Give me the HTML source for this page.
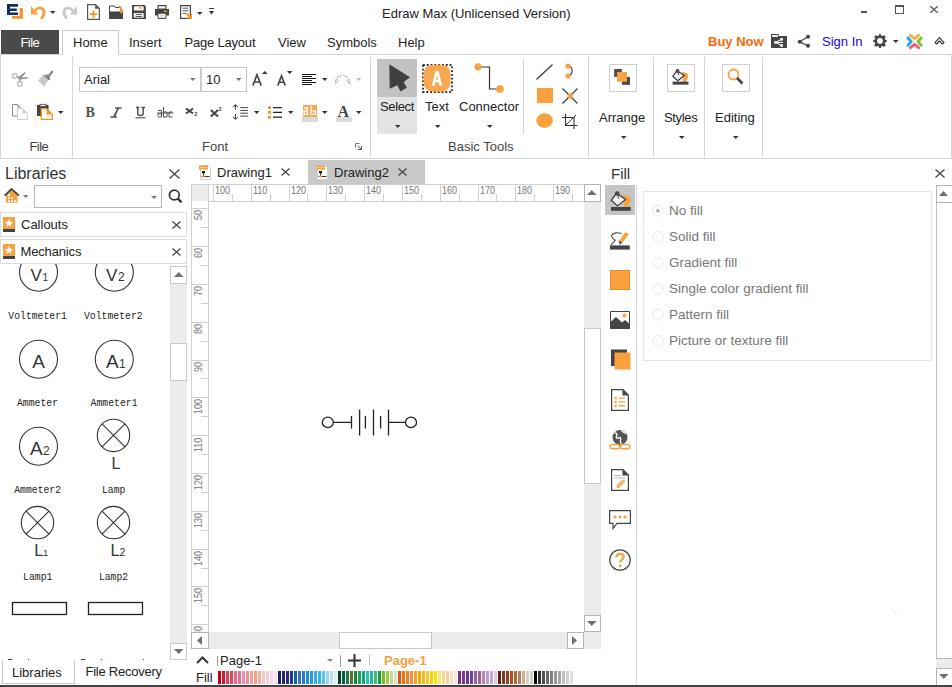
<!DOCTYPE html>
<html><head><meta charset="utf-8">
<style>
*{box-sizing:border-box;margin:0;padding:0}
html,body{width:952px;height:687px;overflow:hidden;background:#fff}
body{position:relative;font-family:"Liberation Sans",sans-serif;font-size:13px;color:#1e1e1e}
.a{position:absolute}
.t{position:absolute;white-space:nowrap;line-height:1}
svg{position:absolute;overflow:visible}
</style></head><body>

<!-- ===== TITLE BAR ===== -->
<div class="t" style="left:382px;top:6.5px;font-size:13px;color:#222">Edraw Max (Unlicensed Version)</div>


<!-- title bar icons -->
<svg style="left:7px;top:4px" width="16" height="15" viewBox="0 0 16 15">
 <path d="M0 0H11V2.7H3V4.4H9.8V6.9H3V8.4H11V11H0Z" fill="#15305e"/>
 <path d="M12.6 4H15.9V14.7H5.1V12H12.6Z" fill="#f7931e"/>
</svg>
<svg style="left:31px;top:6px" width="15" height="14" viewBox="0 0 15 14">
 <path d="M0 0V8.5H7.2Z" fill="#f9a03f"/>
 <path d="M4 5.2C5.5 1.8 9.5 0.8 11.8 3C14 5.2 13.2 9.5 10 12.8" stroke="#f9a03f" stroke-width="2.8" fill="none"/>
</svg>
<svg style="left:50px;top:11px" width="6" height="3"><path d="M0 0H5.5L2.75 3Z" fill="#333"/></svg>
<svg style="left:63px;top:6px" width="15" height="14" viewBox="0 0 15 14">
 <path d="M14 0V8.5H6.8Z" fill="#c8c8c8"/>
 <path d="M10 5.2C8.5 1.8 4.5 0.8 2.2 3C0 5.2 0.8 9.5 4 12.8" stroke="#c8c8c8" stroke-width="2.8" fill="none"/>
</svg>
<!-- new -->
<svg style="left:87px;top:4px" width="13" height="16" viewBox="0 0 13 16">
 <path d="M0.6 0.6H8.5L12.4 4.5V15.4H0.6Z" fill="#fff" stroke="#555" stroke-width="1.2"/>
 <path d="M8.2 0.6V4.8H12.4Z" fill="#555"/>
 <path d="M6.5 6.5V14M2.8 10.2H10.2" stroke="#f7931e" stroke-width="1.8"/>
</svg>
<!-- open -->
<svg style="left:109px;top:5px" width="15" height="14" viewBox="0 0 15 14">
 <path d="M0.5 1H5.5L6.5 2.5H12V7H0.5Z" fill="#fff" stroke="#444" stroke-width="1"/>
 <path d="M0 7H14V14H0Z" fill="#444"/>
 <path d="M9.5 1.5C12 1.5 12.5 3.5 12.5 6" stroke="#f7931e" stroke-width="1.6" fill="none"/>
 <path d="M9.8 5.5H15L12.4 9Z" fill="#f7931e"/>
</svg>
<!-- save -->
<svg style="left:132px;top:5px" width="14" height="14" viewBox="0 0 14 14">
 <path d="M0 0H12.5L13.9 1.4V13.9H0Z" fill="#444"/>
 <rect x="1.9" y="1.3" width="9.8" height="4.3" rx="1.2" fill="#fff"/>
 <rect x="7" y="2.2" width="2.7" height="1.4" fill="#f7931e"/>
 <rect x="1.7" y="8" width="10" height="4.7" rx="1.2" fill="#fff"/>
 <path d="M3.5 9.4H10M3.5 11.6H10" stroke="#444" stroke-width="1"/>
</svg>
<!-- print -->
<svg style="left:155px;top:5px" width="14" height="14" viewBox="0 0 14 14">
 <path d="M3 0.6H11V4H3Z" fill="#fff" stroke="#444" stroke-width="1.1"/>
 <path d="M0 4H14V10.5H0Z" fill="#444"/>
 <path d="M9 5.5H12V7H9Z" fill="#f7931e"/>
 <path d="M3 8.2H11V13.5H3Z" fill="#fff" stroke="#444" stroke-width="1"/>
 <path d="M4.5 10.3H9.5M4.5 12H9.5" stroke="#bbb" stroke-width="0.8"/>
</svg>
<!-- export -->
<svg style="left:180px;top:5px" width="13" height="14" viewBox="0 0 13 14">
 <path d="M0.6 0.6H10.4V13.4H0.6Z" fill="#fff" stroke="#444" stroke-width="1.2"/>
 <path d="M2.5 3.2H8.5M2.5 5.8H8.5M2.5 8.4H6" stroke="#555" stroke-width="1"/>
 <path d="M6.5 8.5L10 12" stroke="#f7931e" stroke-width="2"/>
 <path d="M12 8.5V13.8H6.7Z" fill="#f7931e"/>
</svg>
<svg style="left:197px;top:12px" width="6" height="3"><path d="M0 0H5.5L2.75 3Z" fill="#333"/></svg>
<svg style="left:209px;top:8px" width="5" height="7"><path d="M0 0.5H5" stroke="#333" stroke-width="1"/><path d="M0 3H5L2.5 6.5Z" fill="#333"/></svg>
<!-- window controls -->
<div class="a" style="left:861px;top:11px;width:6px;height:2px;background:#555"></div>
<div class="a" style="left:895px;top:5px;width:9px;height:9px;border:1px solid #555;border-top-width:2px"></div>
<svg style="left:930px;top:6px" width="8" height="7"><path d="M0.3 0.3L7.7 6.7M7.7 0.3L0.3 6.7" stroke="#555" stroke-width="1.2"/></svg>

<!-- ===== MENU BAR ===== -->
<div class="a" style="left:1px;top:30px;width:58px;height:24px;background:#4a4a4a"></div>
<div class="t" style="left:20.5px;top:36px;color:#fff;letter-spacing:-0.6px">File</div>
<div class="a" style="left:62px;top:30px;width:57px;height:25px;background:#fff;border:1px solid #c9c9c9;border-bottom:none;z-index:2"></div>
<div class="t" style="left:73px;top:36px;z-index:3">Home</div>
<div class="t" style="left:129px;top:36px">Insert</div>
<div class="t" style="left:184.5px;top:36px;letter-spacing:-0.2px">Page Layout</div>
<div class="t" style="left:278px;top:36px">View</div>
<div class="t" style="left:327px;top:36px">Symbols</div>
<div class="t" style="left:398px;top:36px">Help</div>

<!-- ===== RIBBON ===== -->
<div class="a" style="left:0px;top:54px;width:952px;height:105px;border:1px solid #d5d5d5;background:#fff"></div>
<div class="t" style="left:708px;top:35.2px;color:#fa6a05;font-weight:bold">Buy Now</div>
<svg style="left:771px;top:34px" width="16" height="14" viewBox="0 0 16 14">
 <path d="M0 0H7.7V2.1H16V14H0Z" fill="#444"/>
 <rect x="1" y="1.1" width="5.9" height="1.8" fill="#fff"/>
 <path d="M4.6 8.4L10.6 5.3M4.6 8.4L10.6 11.5M4.6 8.4H12" stroke="#fff" stroke-width="1"/>
 <g fill="#fff"><rect x="9.3" y="4" width="2.6" height="2.6"/><rect x="3.3" y="7.1" width="2.6" height="2.6"/><rect x="9.3" y="10.2" width="2.6" height="2.6"/></g>
</svg>
<svg style="left:798px;top:35px" width="13" height="13" viewBox="0 0 13 13">
 <path d="M10 1.8L1.6 6.8L10 10.8" stroke="#444" stroke-width="1.3" fill="none"/>
 <circle cx="10" cy="1.8" r="2" fill="#444"/><circle cx="1.8" cy="6.8" r="2" fill="#444"/><circle cx="10" cy="10.8" r="2" fill="#444"/>
</svg>
<div class="t" style="left:822px;top:35.2px;color:#2200f5">Sign In</div>
<svg style="left:873px;top:34px" width="14" height="14" viewBox="0 0 14 14">
 <g fill="#444"><rect x="2" y="2" width="10" height="10" rx="1.2"/>
 <rect x="5.7" y="0.1" width="2.6" height="13.8" rx="1.2"/><rect x="0.1" y="5.7" width="13.8" height="2.6" rx="1.2"/>
 <rect x="5.6" y="-0.3" width="2.8" height="14.6" rx="1.4" transform="rotate(45 7 7)"/><rect x="5.6" y="-0.3" width="2.8" height="14.6" rx="1.4" transform="rotate(-45 7 7)"/></g>
 <circle cx="7" cy="7" r="2.9" fill="#fff"/>
</svg>
<svg style="left:893px;top:40px" width="6" height="3"><path d="M0 0H5.5L2.75 3Z" fill="#333"/></svg>
<svg style="left:906px;top:33px" width="17" height="17" viewBox="0 0 17 17">
 <g fill="none" stroke-width="3" stroke-linecap="round" stroke-linejoin="round">
 <path d="M4.4 2.4L8.6 5.6L12.6 2.4" stroke="#f3b33d"/>
 <path d="M2 4.9L5.2 8.5L2 12.2" stroke="#2fa6e2"/>
 <path d="M15.2 4.9L12 8.5L15.2 12.2" stroke="#7fc241"/>
 <path d="M4.4 14.6L8.6 11.4L12.6 14.6" stroke="#ef5a7e"/>
 </g>
</svg>
<svg style="left:934px;top:36px" width="11" height="9" viewBox="0 0 11 9"><path d="M1 6.6L5.5 1.6L10 6.6L8.4 8L5.5 5L2.6 8Z" fill="none" stroke="#333" stroke-width="1.1" stroke-linejoin="round"/></svg>

<!-- ribbon separators -->
<div class="a" style="left:72px;top:57px;width:1px;height:100px;background:#d5d5d5"></div>
<div class="a" style="left:370px;top:57px;width:1px;height:100px;background:#d5d5d5"></div>
<div class="a" style="left:523px;top:59px;width:1px;height:75px;background:#d5d5d5"></div>
<div class="a" style="left:588px;top:57px;width:1px;height:100px;background:#d5d5d5"></div>
<div class="a" style="left:653px;top:57px;width:1px;height:100px;background:#d5d5d5"></div>
<div class="a" style="left:704px;top:57px;width:1px;height:100px;background:#d5d5d5"></div>
<div class="a" style="left:762px;top:57px;width:1px;height:100px;background:#d5d5d5"></div>
<!-- group labels -->
<div class="t" style="left:29.5px;top:140px;color:#444;letter-spacing:-0.6px">File</div>
<div class="t" style="left:202px;top:140px;color:#444">Font</div>
<div class="t" style="left:448px;top:140px;color:#444">Basic Tools</div>
<svg style="left:355px;top:143px" width="7" height="7" viewBox="0 0 7 7"><path d="M0.5 0.5H4.5M0.5 0.5V4.5" stroke="#777" stroke-width="1" fill="none"/><path d="M2.5 2.5L6 6M6.5 3V6.5H3" stroke="#555" stroke-width="1" fill="none"/></svg>
<!-- File group icons -->
<svg style="left:12px;top:70px" width="17" height="18" viewBox="12 70 17 18">
 <circle cx="14.8" cy="76" r="2.3" fill="none" stroke="#cacaca" stroke-width="1.7"/>
 <circle cx="19.8" cy="83.9" r="2.3" fill="none" stroke="#cacaca" stroke-width="1.7"/>
 <path d="M17 76.6L19.2 77.6L19.8 81.5" stroke="#8c8c8c" stroke-width="1.4" fill="none"/>
 <path d="M18.3 77.2L24.6 72.2L25.7 73L20.2 78.8Z" fill="#8c8c8c"/>
 <path d="M19 77.6L27.9 77.2L27.6 78.6L20.2 79.5Z" fill="#8c8c8c"/>
</svg>
<svg style="left:37px;top:70px" width="17" height="18" viewBox="37 70 17 18">
 <path d="M38.2 80.4L42.9 75.3L48.2 80.1L44.2 86.7Z" fill="#c8c8c8"/>
 <path d="M42.9 75.3L49.8 74L50.2 80.2L48.2 80.1Z" fill="#8c8c8c"/>
 <path d="M49.3 75.5L52.3 71.6" stroke="#8c8c8c" stroke-width="2.2" stroke-linecap="round"/>
</svg>
<svg style="left:12px;top:104px" width="16" height="16" viewBox="0 0 16 16">
 <path d="M0.5 0.5H5.5L8.5 3.5V12H0.5Z" fill="#fff" stroke="#8a8a8a" stroke-width="1"/>
 <path d="M5.5 0.5V3.5H8.5Z" fill="#999"/>
 <path d="M5.5 4.5H10.5L15.5 9.5V15.5H5.5Z" fill="#fff" stroke="#cfcfcf" stroke-width="1"/>
 <path d="M10.5 4.5V9.5H15.5Z" fill="#d0d0d0"/>
</svg>
<svg style="left:37px;top:104px" width="17" height="16" viewBox="0 0 17 16">
 <rect x="0" y="1" width="11.5" height="11" fill="#444"/>
 <rect x="3" y="0.3" width="6" height="2" fill="#fff" stroke="#444" stroke-width="0.8"/>
 <path d="M4.3 4.6H9.5L15.3 10.4V15.4H4.3Z" fill="#fff" stroke="#f7931e" stroke-width="1.3"/>
 <path d="M9.5 4.6V10.4H15.3Z" fill="#f7931e"/>
</svg>
<svg style="left:58px;top:111px" width="6" height="3"><path d="M0 0H5.5L2.75 3Z" fill="#333"/></svg>




<!-- Font group -->
<div class="a" style="left:79px;top:67px;width:168px;height:25px;border:1px solid #c6c6c6;background:#fff"></div>
<div class="a" style="left:200px;top:67px;width:2px;height:25px;background:#cbcbcb"></div>
<div class="t" style="left:84px;top:73px;color:#222">Arial</div>
<svg style="left:190px;top:78px" width="6" height="3"><path d="M0 0H5.5L2.75 3Z" fill="#777"/></svg>
<div class="t" style="left:206px;top:73px;color:#222">10</div>
<svg style="left:236px;top:78px" width="6" height="3"><path d="M0 0H5.5L2.75 3Z" fill="#777"/></svg>
<svg style="left:252px;top:74px" width="10" height="12" viewBox="0 0 10 12"><path d="M0.8 11.6L5 0.8L9.2 11.6M2.3 8H7.7" stroke="#444" stroke-width="1.6" fill="none"/></svg>
<svg style="left:262px;top:71px" width="6" height="3"><path d="M0 3H5.5L2.75 0Z" fill="#333"/></svg>
<svg style="left:277px;top:75px" width="9" height="11" viewBox="0 0 9 11"><path d="M0.8 10.6L4.5 0.8L8.2 10.6M2.1 7.2H6.9" stroke="#444" stroke-width="1.6" fill="none"/></svg>
<svg style="left:287px;top:71px" width="6" height="3"><path d="M0 0H5.5L2.75 3Z" fill="#333"/></svg>
<svg style="left:302px;top:74px" width="15" height="11" viewBox="0 0 15 11"><path d="M0 0.5H14M0 2.5H10M0 4.5H14M0 6.5H10M0 8.5H14M0 10.5H10" stroke="#111" stroke-width="1"/></svg>
<svg style="left:322px;top:78px" width="6" height="3"><path d="M0 0H5.5L2.75 3Z" fill="#333"/></svg>
<svg style="left:330px;top:66px" width="24" height="20" viewBox="0 0 24 20">
 <path d="M7 11.7L11.7 9.1M13.3 9.1L17.8 11.7" stroke="#a8a8a8" stroke-width="1.3" stroke-dasharray="1.2 0.6"/>
 <circle cx="6.6" cy="14.4" r="1.2" fill="none" stroke="#aaa" stroke-width="0.9"/>
 <circle cx="18.6" cy="14.4" r="1.2" fill="none" stroke="#aaa" stroke-width="0.9"/>
 <path d="M6.3 15.6L5.8 17.6H5M18.9 15.6L19.4 17.6H20.8" stroke="#999" stroke-width="0.9" fill="none"/>
</svg>
<svg style="left:356px;top:78px" width="6" height="3"><path d="M0 0H5.5L2.75 3Z" fill="#bbb"/></svg>
<!-- row 2 -->
<div class="t" style="left:85.5px;top:106px;font-family:'Liberation Serif',serif;font-weight:bold;font-size:14px;color:#505050">B</div>
<svg style="left:110px;top:107px" width="12" height="11" viewBox="0 0 12 11"><path d="M5 1H11.5M0.5 10H7M8.5 1L3.5 10" stroke="#505050" stroke-width="1.5" fill="none"/><path d="M8.3 1L4.5 10" stroke="#505050" stroke-width="1.2"/></svg>
<svg style="left:135px;top:106px" width="11" height="13" viewBox="0 0 11 13"><path d="M1 1.5H4.5M6.5 1.5H10M2.8 1.5V7.5C2.8 10.2 8.2 10.2 8.2 7.5V1.5" stroke="#505050" stroke-width="1.5" fill="none"/><path d="M0.5 11.8H10.5" stroke="#505050" stroke-width="1.1"/></svg>
<svg style="left:157px;top:107px" width="17" height="11" viewBox="0 0 17 11"><g stroke="#505050" stroke-width="1" fill="none"><path d="M1 3.5H4.5V10H1.5C0.5 10 0.5 7 1.5 7H4.5"/><path d="M6.5 0V10H10V5H6.5"/><path d="M15.5 5H12V10H15.5"/><path d="M0 6H16.5"/></g></svg>
<svg style="left:185px;top:107px" width="13" height="11" viewBox="0 0 13 11"><path d="M1 1.5L8 6.5M8 1.5L1 6.5" stroke="#444" stroke-width="2.1"/><text x="9.3" y="9.4" font-family="Liberation Sans" font-weight="bold" font-size="5.5" fill="#444">2</text></svg>
<svg style="left:210px;top:107px" width="13" height="11" viewBox="0 0 13 11"><path d="M0.8 3L8 9.5M8 3L0.8 9.5" stroke="#444" stroke-width="2.1"/><text x="8.6" y="3.8" font-family="Liberation Sans" font-weight="bold" font-size="5.5" fill="#444">2</text></svg>
<svg style="left:232px;top:104px" width="17" height="16" viewBox="0 0 17 16"><path d="M3.4 1V5.5M3.4 10V15" stroke="#333" stroke-width="1"/><path d="M1 3.2L3.4 0.6L5.8 3.2M1 12.8L3.4 15.4L5.8 12.8" stroke="#333" stroke-width="1" fill="none"/><path d="M8.3 3.6H16.1M8.3 6.4H16.1M8.3 9.2H16.1M8.3 12.1H16.1" stroke="#444" stroke-width="1"/></svg>
<svg style="left:254px;top:111px" width="6" height="3"><path d="M0 0H5.5L2.75 3Z" fill="#333"/></svg>
<svg style="left:268px;top:106px" width="15" height="13" viewBox="0 0 15 13"><path d="M0 0.3H3V3H0ZM0 5H3V7.8H0ZM0 10H3V12.8H0Z" fill="#f7931e"/><path d="M5 1.6H14M5 6.4H14M5 11.2H14" stroke="#222" stroke-width="1.2"/></svg>
<svg style="left:288px;top:111px" width="6" height="3"><path d="M0 0H5.5L2.75 3Z" fill="#333"/></svg>
<svg style="left:302px;top:105px" width="16" height="17" viewBox="0 0 16 17"><rect x="1" y="0" width="14" height="12" fill="#f9a84f"/>
<path d="M2 2.8H5.3V9.3H2.2V5.9H5.3M9 0.8V9.3H13.3V5.9H9" stroke="#fff" stroke-width="1.3" fill="none"/>
<rect x="0" y="12" width="16" height="5" fill="#d9d9d9"/></svg>
<svg style="left:322px;top:111px" width="6" height="3"><path d="M0 0H5.5L2.75 3Z" fill="#333"/></svg>
<svg style="left:336px;top:104px" width="16" height="18" viewBox="0 0 16 18"><text x="1.5" y="12.5" font-family="Liberation Serif" font-weight="bold" font-size="16" fill="#444">A</text><rect x="0" y="13" width="16" height="5" fill="#d9d9d9"/></svg>
<svg style="left:356px;top:111px" width="6" height="3"><path d="M0 0H5.5L2.75 3Z" fill="#333"/></svg>

<!-- Basic Tools -->
<div class="a" style="left:377px;top:59px;width:40px;height:38px;background:#c2c2c2"></div>
<div class="a" style="left:377px;top:97px;width:40px;height:37px;background:#e3e3e3"></div>
<svg style="left:388px;top:64px" width="23" height="28" viewBox="0 0 23 28"><path d="M1.3 0.3L1.7 24.7L9.4 21.3L12.4 27.6L18.9 23.8L15.7 18L22 13.3Z" fill="#404040"/></svg>
<div class="t" style="left:380px;top:100px;color:#222;letter-spacing:-0.35px">Select</div>
<svg style="left:395px;top:125px" width="6" height="3"><path d="M0 0H5.5L2.75 3Z" fill="#333"/></svg>
<svg style="left:422px;top:64px" width="31" height="29" viewBox="0 0 31 29"><rect x="1" y="1" width="29" height="27" fill="none" stroke="#222" stroke-width="1.8" stroke-dasharray="1.8 2"/><rect x="1.5" y="0.7" width="27" height="27" rx="9" fill="#f9a84f"/><path d="M9.8 21.5L13.4 7.3H16.6L20.2 21.5H17.3L16.6 18.3H13.4L12.7 21.5ZM14 15.8H16L15 10.8Z" fill="#fff" fill-rule="evenodd"/></svg>
<div class="t" style="left:425px;top:100px;color:#222">Text</div>
<svg style="left:435px;top:125px" width="6" height="3"><path d="M0 0H5.5L2.75 3Z" fill="#333"/></svg>
<svg style="left:474px;top:63px" width="31" height="31" viewBox="0 0 31 31"><path d="M4 4H15.5V26H26" stroke="#333" stroke-width="1.2" fill="none"/><circle cx="4" cy="3.8" r="3.6" fill="#f9a03f"/><circle cx="26" cy="26" r="3.8" fill="#f9a03f"/></svg>
<div class="t" style="left:459px;top:100px;color:#222">Connector</div>
<svg style="left:487px;top:125px" width="6" height="3"><path d="M0 0H5.5L2.75 3Z" fill="#333"/></svg>
<svg style="left:536px;top:64px" width="17" height="16"><path d="M0.5 15.5L16.5 0.5" stroke="#333" stroke-width="1.1"/></svg>
<svg style="left:564px;top:63px" width="12" height="16" viewBox="0 0 12 16"><path d="M4 3C9 3.5 10 11 4 13" stroke="#333" stroke-width="1.1" fill="none"/><circle cx="4" cy="3" r="2.6" fill="#f9a03f"/><circle cx="4" cy="13" r="2.6" fill="#f9a03f"/></svg>
<div class="a" style="left:537px;top:88px;width:16px;height:15px;background:#f9a03f"></div>
<svg style="left:562px;top:88px" width="16" height="16" viewBox="0 0 16 16"><path d="M0.5 0.5L15.5 15.5M15.5 0.5L0.5 15.5" stroke="#333" stroke-width="1.1"/><circle cx="8" cy="8" r="2.8" fill="#f9a03f"/></svg>
<svg style="left:536px;top:113px" width="18" height="16"><ellipse cx="8.6" cy="7.6" rx="8.3" ry="7.3" fill="#f9a03f"/></svg>
<svg style="left:562px;top:114px" width="16" height="15" viewBox="0 0 16 15"><path d="M3.5 0V11.5H15.5M0 3.5H12V15" stroke="#333" stroke-width="1.1" fill="none"/><path d="M4 11L14 1" stroke="#333" stroke-width="1"/></svg>

<!-- Arrange / Styles / Editing -->
<div class="a" style="left:609px;top:64px;width:28px;height:28px;border:1px solid #d0d0d0"></div>
<svg style="left:614px;top:69px" width="17" height="17" viewBox="0 0 17 17"><rect x="0.2" y="0" width="7.6" height="7.9" fill="#4a4a4a"/><rect x="8" y="7.9" width="8" height="7.9" fill="#4a4a4a"/><rect x="3" y="3" width="10" height="9.8" fill="#f9a03f"/></svg>
<div class="t" style="left:599px;top:111px;color:#222">Arrange</div>
<svg style="left:621px;top:136px" width="6" height="3"><path d="M0 0H5.5L2.75 3Z" fill="#333"/></svg>
<div class="a" style="left:667px;top:64px;width:28px;height:28px;border:1px solid #d0d0d0"></div>
<svg style="left:670.6px;top:68.4px" width="18.4" height="16.8" viewBox="0 0 23 21">
 <path d="M13 5C17 5 21.5 6 21.8 10.3C22 12.5 19.5 13.5 19 16.8H15L14.6 13.6L16.7 9.4Z" fill="#f9a03f"/>
 <path d="M2.2 10.3L7.5 3.3L16.7 9.4L8.5 15.9Z" fill="#f0f0f0" stroke="#333" stroke-width="1.4" stroke-linejoin="round"/>
 <circle cx="8.3" cy="3.6" r="1.7" fill="none" stroke="#333" stroke-width="1.3"/>
 <path d="M8.6 4.5L9.6 8.6" stroke="#444" stroke-width="1.3"/>
 <rect x="2" y="17" width="19.8" height="3.8" fill="#444"/>
</svg>
<div class="t" style="left:664px;top:111px;color:#222;letter-spacing:-0.35px">Styles</div>
<svg style="left:679px;top:136px" width="6" height="3"><path d="M0 0H5.5L2.75 3Z" fill="#333"/></svg>
<div class="a" style="left:722px;top:64px;width:28px;height:28px;border:1px solid #d0d0d0"></div>
<svg style="left:727px;top:68px" width="18" height="18" viewBox="0 0 18 18"><circle cx="6.5" cy="6.5" r="5" fill="none" stroke="#f9a03f" stroke-width="1.8"/><path d="M10 10L15.5 15.5" stroke="#444" stroke-width="2.6"/></svg>
<div class="t" style="left:715px;top:111px;color:#222">Editing</div>
<svg style="left:733px;top:136px" width="6" height="3"><path d="M0 0H5.5L2.75 3Z" fill="#333"/></svg>

<!-- ===== LIBRARIES PANEL ===== -->
<div class="t" style="left:5px;top:165.8px;font-size:16px;color:#333">Libraries</div>
<svg style="left:169px;top:169px" width="11" height="10"><path d="M0.5 0.5L10.5 9.5M10.5 0.5L0.5 9.5" stroke="#444" stroke-width="1.3"/></svg>
<div class="a" style="left:34px;top:185px;width:128px;height:23px;border:1px solid #b9b9b9;background:#fff"></div>
<svg style="left:151px;top:196px" width="6" height="3"><path d="M0 0H6L3 3Z" fill="#777"/></svg>
<div class="a" style="left:0px;top:212px;width:187px;height:25px;border:1px solid #dcdcdc;background:#fff"></div>
<div class="t" style="left:21px;top:218px;color:#222">Callouts</div>
<svg style="left:172px;top:221px" width="9" height="8"><path d="M0.5 0.5L8.5 7.5M8.5 0.5L0.5 7.5" stroke="#444" stroke-width="1.2"/></svg>
<div class="a" style="left:0px;top:239px;width:187px;height:25px;border:1px solid #dcdcdc;background:#fff"></div>
<div class="t" style="left:20.5px;top:245px;color:#222;letter-spacing:-0.15px">Mechanics</div>
<svg style="left:172px;top:248px" width="9" height="8"><path d="M0.5 0.5L8.5 7.5M8.5 0.5L0.5 7.5" stroke="#444" stroke-width="1.2"/></svg>

<!-- library icons -->
<svg style="left:4px;top:188px" width="16" height="15" viewBox="0 0 16 15">
 <path d="M2.1 7.3L7.55 2.2L13.5 7.3V14.7H2.1Z" fill="#f9a03f"/>
 <path d="M0.6 7.6L7.55 1L14.9 7.6" stroke="#444" stroke-width="1.9" fill="none"/>
 <g fill="#fff"><rect x="4" y="6.1" width="1.9" height="1.9"/><rect x="4" y="9.1" width="1.9" height="1.9"/><rect x="7.1" y="9.1" width="1.9" height="1.9"/><rect x="4" y="12.2" width="1.9" height="1.9"/><rect x="7.1" y="12.2" width="1.9" height="1.9"/><rect x="10.1" y="12.2" width="1.9" height="1.9"/></g>
</svg>
<svg style="left:23px;top:195px" width="6" height="3"><path d="M0 0H5.5L2.75 3Z" fill="#777"/></svg>
<svg style="left:168px;top:189px" width="15" height="15" viewBox="0 0 15 15"><circle cx="6.3" cy="6" r="4.9" fill="none" stroke="#333" stroke-width="1.7"/><path d="M9.6 9.4L13.5 13.3" stroke="#333" stroke-width="2.4"/></svg>
<svg style="left:3px;top:217px" width="12" height="15" viewBox="0 0 12 15"><rect x="0" y="0" width="12" height="12" fill="#f9a03f"/><rect x="0" y="12" width="12" height="3" fill="#444"/><path d="M6 2L7.2 4.8L10.2 5L7.9 6.9L8.6 9.8L6 8.2L3.4 9.8L4.1 6.9L1.8 5L4.8 4.8Z" fill="#fff"/></svg>
<svg style="left:3px;top:244px" width="12" height="15" viewBox="0 0 12 15"><rect x="0" y="0" width="12" height="12" fill="#f9a03f"/><rect x="0" y="12" width="12" height="3" fill="#444"/><path d="M6 2L7.2 4.8L10.2 5L7.9 6.9L8.6 9.8L6 8.2L3.4 9.8L4.1 6.9L1.8 5L4.8 4.8Z" fill="#fff"/></svg>
<!-- library shapes -->
<div class="a" style="left:0px;top:264px;width:170px;height:396px;overflow:hidden">
<svg style="left:0px;top:0px" width="170" height="396" viewBox="0 264 170 396">
 <g fill="none" stroke="#333" stroke-width="1.1">
  <circle cx="38.5" cy="272.2" r="19"/>
  <circle cx="114.3" cy="272.2" r="19"/>
  <circle cx="38.5" cy="359.2" r="19"/>
  <circle cx="114.3" cy="359.2" r="19"/>
  <circle cx="38.5" cy="446.2" r="19"/>
  <circle cx="113.5" cy="435.4" r="16.2"/>
  <path d="M102 423.9L125 446.9M125 423.9L102 446.9"/>
  <circle cx="37.5" cy="522.6" r="16.2"/>
  <path d="M26 511.1L49 534.1M49 511.1L26 534.1"/>
  <circle cx="113.5" cy="522.6" r="16.2"/>
  <path d="M102 511.1L125 534.1M125 511.1L102 534.1"/>
 </g>
 <g fill="none" stroke="#222" stroke-width="1.3">
  <rect x="12.5" y="602.5" width="54" height="12"/>
  <rect x="88.5" y="602.5" width="54" height="12"/>
 </g>
 <g font-family="Liberation Sans" fill="#333">
  <text x="30.5" y="280.5" font-size="17">V</text><text x="42.5" y="280.5" font-size="10">1</text>
  <text x="106" y="280.5" font-size="17">V</text><text x="118" y="280.5" font-size="12">2</text>
  <text x="32.3" y="367.8" font-size="19">A</text>
  <text x="106" y="367.8" font-size="19">A</text><text x="119" y="367.8" font-size="12">1</text>
  <text x="30" y="454.8" font-size="19">A</text><text x="43" y="454.8" font-size="12">2</text>
  <text x="111.4" y="468.7" font-size="16">L</text>
  <text x="34.3" y="556" font-size="16.5">L</text><text x="43" y="556" font-size="9.5">1</text>
  <text x="110.6" y="556" font-size="16.5">L</text><text x="119.5" y="556" font-size="10.5">2</text>
 </g>
 <g font-family="Liberation Mono" fill="#222" font-size="11.3">
  <text x="8.3" y="319.2" textLength="58.6" lengthAdjust="spacingAndGlyphs">Voltmeter1</text>
  <text x="84" y="319.2" textLength="58.6" lengthAdjust="spacingAndGlyphs">Voltmeter2</text>
  <text x="17" y="406" textLength="41.0" lengthAdjust="spacingAndGlyphs">Ammeter</text>
  <text x="90.6" y="406" textLength="46.9" lengthAdjust="spacingAndGlyphs">Ammeter1</text>
  <text x="14.2" y="492.8" textLength="46.9" lengthAdjust="spacingAndGlyphs">Ammeter2</text>
  <text x="102" y="492.8" textLength="23.4" lengthAdjust="spacingAndGlyphs">Lamp</text>
  <text x="23.1" y="580" textLength="29.3" lengthAdjust="spacingAndGlyphs">Lamp1</text>
  <text x="98.9" y="580" textLength="29.3" lengthAdjust="spacingAndGlyphs">Lamp2</text>
 </g>
</svg>
</div>

<div class="a" style="left:8px;top:659px;width:4px;height:1px;background:#444"></div><div class="a" style="left:28px;top:659px;width:1px;height:1px;background:#555"></div><div class="a" style="left:81px;top:659px;width:4px;height:1px;background:#444"></div><div class="a" style="left:101px;top:659px;width:1px;height:1px;background:#555"></div><div class="a" style="left:143px;top:659px;width:1px;height:1px;background:#555"></div>
<!-- lib scrollbar -->
<div class="a" style="left:170px;top:266px;width:17px;height:394px;background:#ececec"></div>
<div class="a" style="left:170px;top:266px;width:17px;height:18px;border:1px solid #c8c8c8;background:#fff"></div>
<svg style="left:173.5px;top:272px" width="10" height="5"><path d="M0 5H9.5L4.75 0Z" fill="#707070"/></svg>
<div class="a" style="left:170px;top:343px;width:17px;height:38px;border:1px solid #c8c8c8;background:#fff"></div>
<div class="a" style="left:170px;top:643px;width:17px;height:17px;border:1px solid #c8c8c8;background:#fff"></div>
<svg style="left:173.5px;top:649px" width="10" height="5"><path d="M0 0H9.5L4.75 5Z" fill="#707070"/></svg>
<!-- bottom tabs -->
<div class="a" style="left:2px;top:660px;width:73px;height:24px;border:1px solid #c8c8c8;border-top:none;background:#fff"></div>
<div class="t" style="left:12px;top:666px;color:#222">Libraries</div>
<div class="t" style="left:85.5px;top:665px;color:#222;letter-spacing:-0.25px">File Recovery</div>

<!-- ===== CANVAS AREA ===== -->
<div class="a" style="left:308px;top:160px;width:117px;height:24px;background:#c8c8c8"></div>
<div class="t" style="left:217px;top:166px;color:#222">Drawing1</div>
<svg style="left:281px;top:168px" width="9" height="8"><path d="M0.5 0.5L8.5 7.5M8.5 0.5L0.5 7.5" stroke="#444" stroke-width="1.2"/></svg>
<div class="t" style="left:334px;top:166px;color:#222">Drawing2</div>
<svg style="left:398px;top:168px" width="9" height="8"><path d="M0.5 0.5L8.5 7.5M8.5 0.5L0.5 7.5" stroke="#444" stroke-width="1.2"/></svg>
<!-- rulers -->
<div class="a" style="left:191px;top:184px;width:410px;height:18px;background:#fff;border-bottom:1px solid #d0d0d0;border-top:1px solid #d0d0d0"></div>
<div class="a" style="left:191px;top:184px;width:18px;height:449px;background:#fff;border-left:1px solid #d0d0d0;border-right:1px solid #d0d0d0;border-top:1px solid #d0d0d0"></div>
<div class="a" style="left:192px;top:185px;width:16px;height:16px;background:#ececec"></div>
<!-- v scrollbar -->
<div class="a" style="left:584px;top:184px;width:17px;height:449px;background:#ececec"></div>
<div class="a" style="left:584px;top:184px;width:17px;height:18px;border:1px solid #b4b4b4;background:#fff"></div>
<svg style="left:587px;top:190px" width="10" height="5"><path d="M0 5H9.5L4.75 0Z" fill="#707070"/></svg>
<div class="a" style="left:584px;top:328px;width:17px;height:156px;border:1px solid #c8c8c8;background:#fff"></div>
<div class="a" style="left:584px;top:615px;width:17px;height:17px;border:1px solid #b4b4b4;background:#fff"></div>
<svg style="left:587px;top:621px" width="10" height="5"><path d="M0 0H9.5L4.75 5Z" fill="#707070"/></svg>
<!-- h scrollbar -->
<div class="a" style="left:191px;top:632px;width:410px;height:17px;background:#ececec"></div>
<div class="a" style="left:191px;top:632px;width:18px;height:17px;border:1px solid #b4b4b4;background:#fff"></div>
<svg style="left:197px;top:636px" width="5" height="9"><path d="M5 0V9L0 4.5Z" fill="#707070"/></svg>
<div class="a" style="left:339px;top:632px;width:93px;height:17px;border:1px solid #c8c8c8;background:#fff"></div>
<div class="a" style="left:567px;top:632px;width:17px;height:17px;border:1px solid #b4b4b4;background:#fff"></div>
<svg style="left:572px;top:636px" width="5" height="9"><path d="M0 0V9L5 4.5Z" fill="#707070"/></svg>

<!-- ruler marks -->
<div class="a" style="left:192px;top:185px;width:392px;height:16px;overflow:hidden"><div class="a" style="left:21px;top:0px;width:1px;height:16px;background:#d0d0d0"></div><div class="t" style="left:23px;top:1.2px;font-size:10px;color:#777;transform-origin:0 0;transform:scaleX(0.9)">100</div><div class="a" style="left:40px;top:9px;width:1px;height:7px;background:#d0d0d0"></div><div class="a" style="left:59px;top:0px;width:1px;height:16px;background:#d0d0d0"></div><div class="t" style="left:61px;top:1.2px;font-size:10px;color:#777;transform-origin:0 0;transform:scaleX(0.9)">110</div><div class="a" style="left:78px;top:9px;width:1px;height:7px;background:#d0d0d0"></div><div class="a" style="left:97px;top:0px;width:1px;height:16px;background:#d0d0d0"></div><div class="t" style="left:99px;top:1.2px;font-size:10px;color:#777;transform-origin:0 0;transform:scaleX(0.9)">120</div><div class="a" style="left:115px;top:9px;width:1px;height:7px;background:#d0d0d0"></div><div class="a" style="left:134px;top:0px;width:1px;height:16px;background:#d0d0d0"></div><div class="t" style="left:136px;top:1.2px;font-size:10px;color:#777;transform-origin:0 0;transform:scaleX(0.9)">130</div><div class="a" style="left:153px;top:9px;width:1px;height:7px;background:#d0d0d0"></div><div class="a" style="left:172px;top:0px;width:1px;height:16px;background:#d0d0d0"></div><div class="t" style="left:174px;top:1.2px;font-size:10px;color:#777;transform-origin:0 0;transform:scaleX(0.9)">140</div><div class="a" style="left:191px;top:9px;width:1px;height:7px;background:#d0d0d0"></div><div class="a" style="left:210px;top:0px;width:1px;height:16px;background:#d0d0d0"></div><div class="t" style="left:212px;top:1.2px;font-size:10px;color:#777;transform-origin:0 0;transform:scaleX(0.9)">150</div><div class="a" style="left:229px;top:9px;width:1px;height:7px;background:#d0d0d0"></div><div class="a" style="left:248px;top:0px;width:1px;height:16px;background:#d0d0d0"></div><div class="t" style="left:250px;top:1.2px;font-size:10px;color:#777;transform-origin:0 0;transform:scaleX(0.9)">160</div><div class="a" style="left:267px;top:9px;width:1px;height:7px;background:#d0d0d0"></div><div class="a" style="left:286px;top:0px;width:1px;height:16px;background:#d0d0d0"></div><div class="t" style="left:288px;top:1.2px;font-size:10px;color:#777;transform-origin:0 0;transform:scaleX(0.9)">170</div><div class="a" style="left:304px;top:9px;width:1px;height:7px;background:#d0d0d0"></div><div class="a" style="left:323px;top:0px;width:1px;height:16px;background:#d0d0d0"></div><div class="t" style="left:325px;top:1.2px;font-size:10px;color:#777;transform-origin:0 0;transform:scaleX(0.9)">180</div><div class="a" style="left:342px;top:9px;width:1px;height:7px;background:#d0d0d0"></div><div class="a" style="left:361px;top:0px;width:1px;height:16px;background:#d0d0d0"></div><div class="t" style="left:363px;top:1.2px;font-size:10px;color:#777;transform-origin:0 0;transform:scaleX(0.9)">190</div><div class="a" style="left:380px;top:9px;width:1px;height:7px;background:#d0d0d0"></div><div class="a" style="left:399px;top:0px;width:1px;height:16px;background:#d0d0d0"></div><div class="t" style="left:401px;top:1.2px;font-size:10px;color:#777;transform-origin:0 0;transform:scaleX(0.9)">200</div><div class="a" style="left:418px;top:9px;width:1px;height:7px;background:#d0d0d0"></div></div>
<div class="a" style="left:191px;top:202px;width:18px;height:430px;overflow:hidden"><div class="a" style="left:1px;top:6px;width:16px;height:1px;background:#d0d0d0"></div><div class="t" style="left:2.8px;top:17.7px;font-size:10px;color:#777;transform-origin:0 0;transform:rotate(-90deg) scaleX(0.9)">50</div><div class="a" style="left:10px;top:25px;width:7px;height:1px;background:#d0d0d0"></div><div class="a" style="left:1px;top:44px;width:16px;height:1px;background:#d0d0d0"></div><div class="t" style="left:2.8px;top:55.7px;font-size:10px;color:#777;transform-origin:0 0;transform:rotate(-90deg) scaleX(0.9)">60</div><div class="a" style="left:10px;top:63px;width:7px;height:1px;background:#d0d0d0"></div><div class="a" style="left:1px;top:82px;width:16px;height:1px;background:#d0d0d0"></div><div class="t" style="left:2.8px;top:93.7px;font-size:10px;color:#777;transform-origin:0 0;transform:rotate(-90deg) scaleX(0.9)">70</div><div class="a" style="left:10px;top:101px;width:7px;height:1px;background:#d0d0d0"></div><div class="a" style="left:1px;top:120px;width:16px;height:1px;background:#d0d0d0"></div><div class="t" style="left:2.8px;top:131.7px;font-size:10px;color:#777;transform-origin:0 0;transform:rotate(-90deg) scaleX(0.9)">80</div><div class="a" style="left:10px;top:139px;width:7px;height:1px;background:#d0d0d0"></div><div class="a" style="left:1px;top:158px;width:16px;height:1px;background:#d0d0d0"></div><div class="t" style="left:2.8px;top:169.7px;font-size:10px;color:#777;transform-origin:0 0;transform:rotate(-90deg) scaleX(0.9)">90</div><div class="a" style="left:10px;top:176px;width:7px;height:1px;background:#d0d0d0"></div><div class="a" style="left:1px;top:195px;width:16px;height:1px;background:#d0d0d0"></div><div class="t" style="left:2.8px;top:211.8px;font-size:10px;color:#777;transform-origin:0 0;transform:rotate(-90deg) scaleX(0.9)">100</div><div class="a" style="left:10px;top:214px;width:7px;height:1px;background:#d0d0d0"></div><div class="a" style="left:1px;top:233px;width:16px;height:1px;background:#d0d0d0"></div><div class="t" style="left:2.8px;top:249.8px;font-size:10px;color:#777;transform-origin:0 0;transform:rotate(-90deg) scaleX(0.9)">110</div><div class="a" style="left:10px;top:252px;width:7px;height:1px;background:#d0d0d0"></div><div class="a" style="left:1px;top:271px;width:16px;height:1px;background:#d0d0d0"></div><div class="t" style="left:2.8px;top:287.8px;font-size:10px;color:#777;transform-origin:0 0;transform:rotate(-90deg) scaleX(0.9)">120</div><div class="a" style="left:10px;top:290px;width:7px;height:1px;background:#d0d0d0"></div><div class="a" style="left:1px;top:309px;width:16px;height:1px;background:#d0d0d0"></div><div class="t" style="left:2.8px;top:325.8px;font-size:10px;color:#777;transform-origin:0 0;transform:rotate(-90deg) scaleX(0.9)">130</div><div class="a" style="left:10px;top:328px;width:7px;height:1px;background:#d0d0d0"></div><div class="a" style="left:1px;top:347px;width:16px;height:1px;background:#d0d0d0"></div><div class="t" style="left:2.8px;top:363.8px;font-size:10px;color:#777;transform-origin:0 0;transform:rotate(-90deg) scaleX(0.9)">140</div><div class="a" style="left:10px;top:366px;width:7px;height:1px;background:#d0d0d0"></div><div class="a" style="left:1px;top:384px;width:16px;height:1px;background:#d0d0d0"></div><div class="t" style="left:2.8px;top:400.8px;font-size:10px;color:#777;transform-origin:0 0;transform:rotate(-90deg) scaleX(0.9)">150</div><div class="a" style="left:10px;top:403px;width:7px;height:1px;background:#d0d0d0"></div><div class="a" style="left:1px;top:422px;width:16px;height:1px;background:#d0d0d0"></div><div class="t" style="left:2.8px;top:438.8px;font-size:10px;color:#777;transform-origin:0 0;transform:rotate(-90deg) scaleX(0.9)">160</div><div class="a" style="left:10px;top:441px;width:7px;height:1px;background:#d0d0d0"></div></div>
<!-- battery -->
<svg style="left:300px;top:400px" width="130" height="45" viewBox="300 400 130 45">
 <g stroke="#222" stroke-width="1.3" fill="none">
 <ellipse cx="327.8" cy="422.4" rx="5.5" ry="5.2"/>
 <ellipse cx="411" cy="422.4" rx="5.5" ry="5.2"/>
 <path d="M333.3 422.4H351M388.5 422.4H405.5"/>
 <path d="M351.5 416V428.5M365.4 416V428.5M380.6 416V428.5M359.6 409.4V435.6M373.5 409.4V435.6M388.5 409.4V435.6"/>
 </g>
</svg>
<!-- drawing tab icons -->
<svg style="left:199px;top:164px" width="13" height="16" viewBox="0 0 13 16">
 <path d="M1.5 1.5H9.5L11.5 3.5V15.5H1.5Z" fill="#fff" stroke="#d0d0d0" stroke-width="1"/>
 <rect x="0" y="1.5" width="9" height="4" fill="#f9a03f"/>
 <path d="M1.5 3.5H8" stroke="#fff" stroke-width="0.9" stroke-dasharray="1 1"/>
 <rect x="3" y="7" width="3" height="2.2" fill="#111"/>
 <path d="M4.5 9V12.5M2.5 12.5H10.5" stroke="#333" stroke-width="1"/>
 <circle cx="4.5" cy="12.5" r="1.3" fill="#f9a03f"/>
</svg>
<svg style="left:316px;top:164px" width="13" height="16" viewBox="0 0 13 16">
 <path d="M1.5 1.5H9.5L11.5 3.5V15.5H1.5Z" fill="#fff" stroke="#d0d0d0" stroke-width="1"/>
 <rect x="0" y="1.5" width="9" height="4" fill="#f9a03f"/>
 <path d="M1.5 3.5H8" stroke="#fff" stroke-width="0.9" stroke-dasharray="1 1"/>
 <rect x="3" y="7" width="3" height="2.2" fill="#111"/>
 <path d="M4.5 9V12.5M2.5 12.5H10.5" stroke="#333" stroke-width="1"/>
 <circle cx="4.5" cy="12.5" r="1.3" fill="#f9a03f"/>
</svg>

<!-- page bar -->
<svg style="left:196px;top:656px" width="13" height="8"><path d="M1 7L6.5 1.5L12 7" stroke="#333" stroke-width="2" fill="none"/></svg>
<div class="a" style="left:217px;top:656px;width:1px;height:10px;background:#999"></div>
<div class="t" style="left:220px;top:654px;color:#222">Page-1</div>
<svg style="left:327px;top:659px" width="6" height="3"><path d="M0 0H6L3 3Z" fill="#888"/></svg>
<div class="a" style="left:340px;top:655px;width:1px;height:12px;background:#999"></div>
<svg style="left:348px;top:654px" width="13" height="13"><path d="M6.5 0V13M0 6.5H13" stroke="#333" stroke-width="2"/></svg>
<div class="a" style="left:369px;top:655px;width:1px;height:10px;background:#bbb"></div>
<div class="t" style="left:384px;top:654px;color:#f5a040;font-weight:bold">Page-1</div>
<div class="t" style="left:196px;top:671px;color:#222">Fill</div>
<svg style="left:218px;top:671px" width="360" height="13"><rect x="0" y="0" width="3" height="13" fill="#c0001a"/><rect x="4" y="0" width="3" height="13" fill="#d01830"/><rect x="8" y="0" width="3" height="13" fill="#c84868"/><rect x="12" y="0" width="3" height="13" fill="#e04858"/><rect x="16" y="0" width="3" height="13" fill="#e86888"/><rect x="20" y="0" width="3" height="13" fill="#e070a0"/><rect x="24" y="0" width="3" height="13" fill="#e890a8"/><rect x="28" y="0" width="3" height="13" fill="#f09090"/><rect x="32" y="0" width="3" height="13" fill="#f0a0a8"/><rect x="36" y="0" width="3" height="13" fill="#f8a078"/><rect x="40" y="0" width="3" height="13" fill="#f0b0a8"/><rect x="44" y="0" width="3" height="13" fill="#f0c8c0"/><rect x="48" y="0" width="3" height="13" fill="#e8d0e0"/><rect x="52" y="0" width="3" height="13" fill="#f8d8e8"/><rect x="56" y="0" width="3" height="13" fill="#fce0f0"/><rect x="60" y="0" width="3" height="13" fill="#102060"/><rect x="64" y="0" width="3" height="13" fill="#202870"/><rect x="68" y="0" width="3" height="13" fill="#302880"/><rect x="72" y="0" width="3" height="13" fill="#183890"/><rect x="76" y="0" width="3" height="13" fill="#1060b0"/><rect x="80" y="0" width="3" height="13" fill="#4070c0"/><rect x="84" y="0" width="3" height="13" fill="#2080c8"/><rect x="88" y="0" width="3" height="13" fill="#1890d8"/><rect x="92" y="0" width="3" height="13" fill="#2898e0"/><rect x="96" y="0" width="3" height="13" fill="#40a8e0"/><rect x="100" y="0" width="3" height="13" fill="#30b8f0"/><rect x="104" y="0" width="3" height="13" fill="#60c0f0"/><rect x="108" y="0" width="3" height="13" fill="#a0d0f0"/><rect x="112" y="0" width="3" height="13" fill="#c0e0f0"/><rect x="116" y="0" width="3" height="13" fill="#e0f0f8"/><rect x="120" y="0" width="3" height="13" fill="#004028"/><rect x="124" y="0" width="3" height="13" fill="#006040"/><rect x="128" y="0" width="3" height="13" fill="#207850"/><rect x="132" y="0" width="3" height="13" fill="#607020"/><rect x="136" y="0" width="3" height="13" fill="#108840"/><rect x="140" y="0" width="3" height="13" fill="#20a060"/><rect x="144" y="0" width="3" height="13" fill="#10a880"/><rect x="148" y="0" width="3" height="13" fill="#30c0b0"/><rect x="152" y="0" width="3" height="13" fill="#20b8a0"/><rect x="156" y="0" width="3" height="13" fill="#40b870"/><rect x="160" y="0" width="3" height="13" fill="#10a040"/><rect x="164" y="0" width="3" height="13" fill="#80b820"/><rect x="168" y="0" width="3" height="13" fill="#a0c850"/><rect x="172" y="0" width="3" height="13" fill="#c0d890"/><rect x="176" y="0" width="3" height="13" fill="#d0e8c0"/><rect x="180" y="0" width="3" height="13" fill="#e05018"/><rect x="184" y="0" width="3" height="13" fill="#f07010"/><rect x="188" y="0" width="3" height="13" fill="#f08020"/><rect x="192" y="0" width="3" height="13" fill="#f09050"/><rect x="196" y="0" width="3" height="13" fill="#f8a020"/><rect x="200" y="0" width="3" height="13" fill="#f8a800"/><rect x="204" y="0" width="3" height="13" fill="#f8b820"/><rect x="208" y="0" width="3" height="13" fill="#f8c830"/><rect x="212" y="0" width="3" height="13" fill="#f8d000"/><rect x="216" y="0" width="3" height="13" fill="#f8e000"/><rect x="220" y="0" width="3" height="13" fill="#f8e880"/><rect x="224" y="0" width="3" height="13" fill="#f8d890"/><rect x="228" y="0" width="3" height="13" fill="#f0d0a0"/><rect x="232" y="0" width="3" height="13" fill="#f8e0c0"/><rect x="236" y="0" width="3" height="13" fill="#fce8d8"/><rect x="240" y="0" width="3" height="13" fill="#703080"/><rect x="244" y="0" width="3" height="13" fill="#803890"/><rect x="248" y="0" width="3" height="13" fill="#6838a0"/><rect x="252" y="0" width="3" height="13" fill="#7040a0"/><rect x="256" y="0" width="3" height="13" fill="#9060a8"/><rect x="260" y="0" width="3" height="13" fill="#a06090"/><rect x="264" y="0" width="3" height="13" fill="#c080b0"/><rect x="268" y="0" width="3" height="13" fill="#b0a0d8"/><rect x="272" y="0" width="3" height="13" fill="#c0a8d0"/><rect x="276" y="0" width="3" height="13" fill="#e8c8e8"/><rect x="280" y="0" width="3" height="13" fill="#602010"/><rect x="284" y="0" width="3" height="13" fill="#803820"/><rect x="288" y="0" width="3" height="13" fill="#904020"/><rect x="292" y="0" width="3" height="13" fill="#a85020"/><rect x="296" y="0" width="3" height="13" fill="#b06830"/><rect x="300" y="0" width="3" height="13" fill="#b08070"/><rect x="304" y="0" width="3" height="13" fill="#d0b090"/><rect x="308" y="0" width="3" height="13" fill="#d8d0c8"/><rect x="312" y="0" width="3" height="13" fill="#c8d0c8"/><rect x="316" y="0" width="3" height="13" fill="#000000"/><rect x="320" y="0" width="3" height="13" fill="#303030"/><rect x="324" y="0" width="3" height="13" fill="#505050"/><rect x="328" y="0" width="3" height="13" fill="#686868"/><rect x="332" y="0" width="3" height="13" fill="#808080"/><rect x="336" y="0" width="3" height="13" fill="#989898"/><rect x="340" y="0" width="3" height="13" fill="#a8a8a8"/><rect x="344" y="0" width="3" height="13" fill="#c0c0c0"/><rect x="348" y="0" width="3" height="13" fill="#d0d0d0"/><rect x="352" y="0" width="3" height="13" fill="#e0e0e0"/></svg>

<!-- ===== FILL PANEL ===== -->
<div class="t" style="left:611px;top:165.5px;font-size:15px;color:#333">Fill</div>
<svg style="left:935px;top:169px" width="10" height="9"><path d="M0.5 0.5L9.5 8.5M9.5 0.5L0.5 8.5" stroke="#444" stroke-width="1.3"/></svg>
<div class="a" style="left:605px;top:185px;width:30px;height:30px;background:#c4c4c4"></div>
<div class="a" style="left:636px;top:185px;width:1px;height:502px;background:#dadada"></div>
<div class="a" style="left:643px;top:191px;width:289px;height:170px;border:1px solid #e6e6e6"></div>

<!-- fill panel icons -->
<svg style="left:609px;top:190px" width="23" height="21" viewBox="0 0 23 21">
 <path d="M13 5C17 5 21.5 6 21.8 10.3C22 12.5 19.5 13.5 19 16.8H15L14.6 13.6L16.7 9.4Z" fill="#f9a03f"/>
 <path d="M2.2 10.3L7.5 3.3L16.7 9.4L8.5 15.9Z" fill="#f0f0f0" stroke="#333" stroke-width="1.2" stroke-linejoin="round"/>
 <circle cx="8.3" cy="3.6" r="1.7" fill="none" stroke="#333" stroke-width="1.1"/>
 <path d="M8.6 4.5L9.6 8.6" stroke="#555" stroke-width="1.1"/>
 <rect x="2" y="17" width="19.8" height="3.8" fill="#444"/>
</svg>
<svg style="left:609px;top:230px" width="22" height="21" viewBox="0 0 22 21">
 <path d="M12.7 3.5C9 2.2 4 2.5 2.8 5.2C2 7.5 4.5 9 6.2 10.3L2 15" stroke="#444" stroke-width="1.1" fill="none"/>
 <path d="M16.4 2.2L20.1 4L13.5 12.5L10 10.7Z" fill="#f9a03f"/>
 <path d="M10 10.7L13.5 12.5L10.4 14.8Z" fill="#444"/>
 <rect x="1" y="15.4" width="19.8" height="4.2" fill="#444"/>
</svg>
<div class="a" style="left:610px;top:270px;width:20px;height:20px;background:#f9a03f;border:1px solid #e88a20"></div>
<svg style="left:610px;top:311px" width="20" height="18" viewBox="0 0 20 18">
 <path d="M0.5 0.5H19.5V17.5H0.5Z" fill="#fff" stroke="#444" stroke-width="1"/>
 <path d="M0.5 11L6 6L12 11.5L15 9L19.5 13V17.5H0.5Z" fill="#444"/>
 <circle cx="14.5" cy="4.5" r="2" fill="#f9a03f"/>
</svg>
<svg style="left:610px;top:349px" width="21" height="21" viewBox="0 0 21 21"><rect x="1" y="0.5" width="16" height="16.5" fill="#444"/><rect x="4.5" y="3.5" width="16" height="17" fill="#f9a03f"/></svg>
<svg style="left:611px;top:389px" width="18" height="22" viewBox="0 0 18 22">
 <path d="M0.6 0.6H12L17.4 6V21.4H0.6Z" fill="#fff" stroke="#444" stroke-width="1.2"/>
 <path d="M11.5 0.6V6.5H17.4Z" fill="#444"/>
 <g fill="#f9a03f"><rect x="3.5" y="8" width="2.2" height="2.2"/><rect x="3.5" y="11.8" width="2.2" height="2.2"/><rect x="3.5" y="15.6" width="2.2" height="2.2"/></g>
 <path d="M7.5 9.1H14M7.5 12.9H14M7.5 16.7H14" stroke="#f9a03f" stroke-width="1.4"/>
</svg>
<svg style="left:609px;top:429px" width="22" height="22" viewBox="0 0 22 22">
 <circle cx="11" cy="8.5" r="7.5" fill="#555"/>
 <path d="M5.5 4C7.5 3.5 8.5 5.5 7.5 7C6.5 8.5 8.5 10 9.5 9C11 7.5 12.5 9.5 11.5 11.5C11 12.5 11.5 14 12.5 15M12.5 1.5C13.5 3.5 15.5 3 17 4.5" stroke="#fff" stroke-width="1.4" fill="none"/>
 <rect x="1.2" y="15.6" width="9.3" height="4.2" rx="2" fill="none" stroke="#f9a03f" stroke-width="1.5"/>
 <rect x="11.5" y="15.6" width="9.3" height="4.2" rx="2" fill="none" stroke="#f9a03f" stroke-width="1.5"/>
</svg>
<svg style="left:611px;top:469px" width="18" height="22" viewBox="0 0 18 22">
 <path d="M0.6 0.6H12L17.4 6V21.4H0.6Z" fill="#fff" stroke="#444" stroke-width="1.2"/>
 <path d="M11.5 0.6V6.5H17.4Z" fill="#444"/>
 <path d="M3.5 6.5H10M3.5 9H14" stroke="#bbb" stroke-width="1"/>
 <path d="M6 17L11.5 11.5C12.5 10.5 14 12 13 13L8 18C7 19 5.5 18 6.5 17L11 12.5" stroke="#f9a03f" stroke-width="1.1" fill="none"/>
</svg>
<svg style="left:609px;top:510px" width="22" height="20" viewBox="0 0 22 20">
 <path d="M0.6 0.6H21.4V13.4H8L4 18.5V13.4H0.6Z" fill="#fff" stroke="#444" stroke-width="1.2"/>
 <circle cx="6" cy="7" r="1.6" fill="#f9a03f"/><circle cx="11" cy="7" r="1.6" fill="#f9a03f"/><circle cx="16" cy="7" r="1.6" fill="#f9a03f"/>
</svg>
<svg style="left:609px;top:549px" width="22" height="22" viewBox="0 0 22 22">
 <circle cx="11" cy="11" r="10.2" fill="#fff" stroke="#444" stroke-width="1.2"/>
 <path d="M7.5 8.5C7.5 6 9 4.8 11 4.8C13.2 4.8 14.6 6.2 14.6 8C14.6 10.5 11.2 10.8 11.2 13.5" stroke="#f9a03f" stroke-width="2.2" fill="none"/>
 <circle cx="11.2" cy="16.8" r="1.4" fill="#f9a03f"/>
</svg>
<!-- fill options -->
<g></g>
<svg style="left:652.3px;top:204.6px" width="12" height="140" viewBox="0 0 12 140">
 <g fill="#fff" stroke="#e8e8e8" stroke-width="1">
  <circle cx="6" cy="5.8" r="5.2"/><circle cx="6" cy="31.8" r="5.2"/><circle cx="6" cy="57.8" r="5.2"/>
  <circle cx="6" cy="83.8" r="5.2"/><circle cx="6" cy="109.8" r="5.2"/><circle cx="6" cy="135.8" r="5.2"/>
 </g>
 <circle cx="6" cy="5.8" r="1.8" fill="#aaa"/>
</svg>
<div class="t" style="left:669px;top:204px;color:#777;font-size:13.5px">No fill</div>
<div class="t" style="left:669px;top:230px;color:#777;font-size:13.5px">Solid fill</div>
<div class="t" style="left:669px;top:256px;color:#777;font-size:13.5px">Gradient fill</div>
<div class="t" style="left:669px;top:282px;color:#777;font-size:13.5px">Single color gradient fill</div>
<div class="t" style="left:669px;top:308px;color:#777;font-size:13.5px">Pattern fill</div>
<div class="t" style="left:669px;top:334px;color:#777;font-size:13.5px">Picture or texture fill</div>

<svg style="left:891px;top:608px" width="7" height="8"><path d="M1 1L6 7" stroke="#eee" stroke-width="1.2"/></svg>
<!-- fill scrollbar -->
<div class="a" style="left:936px;top:185px;width:16px;height:496px;background:#fff;border-left:1px solid #c0c0c0"></div>
<div class="a" style="left:936px;top:185px;width:16px;height:18px;border:1px solid #b4b4b4;border-right:none;background:#fff"></div>
<svg style="left:939px;top:191px" width="9" height="5"><path d="M0 5H9L4.5 0Z" fill="#707070"/></svg>
<div class="a" style="left:936px;top:658px;width:16px;height:1px;background:#b4b4b4"></div>
<div class="a" style="left:936px;top:659px;width:16px;height:9px;background:#ececec"></div>
<div class="a" style="left:936px;top:668px;width:16px;height:18px;border:1px solid #b4b4b4;border-right:none;background:#fff"></div>
<svg style="left:939px;top:674px" width="10" height="5"><path d="M0 0H9.5L4.75 5Z" fill="#707070"/></svg>

<!-- ===== BOTTOM DARK LINE ===== -->
<div class="a" style="left:0;top:685px;width:952px;height:2px;background:#444"></div>

</body></html>
